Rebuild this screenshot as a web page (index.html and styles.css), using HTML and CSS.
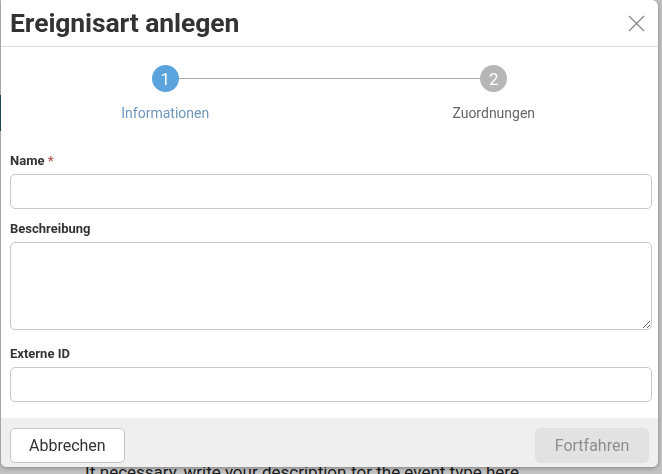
FILE: index.html
```html
<!DOCTYPE html>
<html lang="de">
<head>
    <meta charset="UTF-8">
    <meta name="viewport" content="width=device-width, initial-scale=1.0">
    <title>Ereignisart anlegen</title>
    <link rel="stylesheet" href="styles.css">
</head>
<body>
    <div class="page">
        <div class="page-strip"></div>
        <p class="page-hint">If necessary, write your description for the event type here.</p>
    </div>

    <div class="overlay">
        <div class="modal">
            <div class="modal-header">
                <h1>Ereignisart anlegen</h1>
                <button class="close" aria-label="Schließen">
                    <svg width="17" height="17" viewBox="0 0 17 17">
                        <path d="M1 1 L16 16 M16 1 L1 16" stroke="#8a8a8a" stroke-width="1.4" fill="none"/>
                    </svg>
                </button>
            </div>

            <div class="stepper">
                <div class="step active">
                    <span class="step-dot">1</span>
                    <span class="step-label">Informationen</span>
                </div>
                <div class="step">
                    <span class="step-dot">2</span>
                    <span class="step-label">Zuordnungen</span>
                </div>
            </div>

            <form class="modal-body">
                <label class="field">
                    <span class="field-label">Name <span class="req">*</span></span>
                    <input type="text">
                </label>
                <label class="field">
                    <span class="field-label">Beschreibung</span>
                    <textarea></textarea>
                </label>
                <label class="field">
                    <span class="field-label">Externe ID</span>
                    <input type="text">
                </label>
            </form>

            <div class="modal-footer">
                <button class="btn">Abbrechen</button>
                <button class="btn btn-primary" disabled>Fortfahren</button>
            </div>
        </div>
    </div>
</body>
</html>
```

FILE: styles.css
```css
* {
    margin: 0;
    padding: 0;
    box-sizing: border-box;
    font-family: Roboto, "Liberation Sans", Arial, sans-serif;
}

body {
    background: #ececec;
    color: #333;
    overflow: hidden;
}

.page {
    height: 474px;
    position: relative;
}

.page-strip {
    position: absolute;
    left: 0;
    top: 95px;
    width: 6px;
    height: 36px;
    background: #2f5f73;
}

.page-hint {
    position: absolute;
    left: 85px;
    top: 462px;
    font-size: 17px;
    color: #222;
}

.overlay {
    position: fixed;
    inset: 0;
    background: rgba(0, 0, 0, 0.18);
}

.modal {
    width: 657px;
    margin-left: 1px;
    background: #fff;
    border-radius: 0 6px 6px 6px;
    box-shadow: 0 1px 4px rgba(0, 0, 0, 0.35);
    overflow: hidden;
}

.modal-header {
    height: 47px;
    display: flex;
    align-items: center;
    justify-content: space-between;
    padding: 0 13px 1px 9px;
    border-bottom: 1px solid #dedede;
}

.modal-header h1 {
    font-size: 26.5px;
    font-weight: 700;
    color: #333;
    letter-spacing: -0.1px;
}

.close {
    border: none;
    background: none;
    display: flex;
    margin-top: 1px;
}

.stepper {
    display: flex;
    padding-top: 18px;
    position: relative;
}

.stepper::before {
    content: "";
    position: absolute;
    left: 178px;
    right: 176px;
    top: 31px;
    border-top: 1px solid #a9a9a9;
}

.step {
    flex: 1;
    display: flex;
    flex-direction: column;
    align-items: center;
    gap: 13px;
    position: relative;
}

.step-dot {
    width: 27px;
    height: 27px;
    border-radius: 50%;
    background: #b6b6b6;
    color: #fff;
    font-size: 17px;
    display: flex;
    align-items: center;
    justify-content: center;
}

.step-label {
    font-size: 14px;
    color: #666;
}

.step.active .step-dot {
    background: #5aa3dc;
}

.step.active .step-label {
    color: #6f97bd;
}

.modal-body {
    padding: 32px 6px 16px 9px;
    display: flex;
    flex-direction: column;
    gap: 12px;
}

.field {
    display: flex;
    flex-direction: column;
    gap: 6px;
}

.field-label {
    font-size: 13px;
    font-weight: 700;
    color: #333;
}

.req {
    color: #b2574f;
}

.field input,
.field textarea {
    width: 100%;
    height: 35px;
    border: 1px solid #c8c8c8;
    border-radius: 5px;
    background: #fff;
}

.field textarea {
    height: 88px;
    margin-bottom: 4px;
    resize: vertical;
}

.modal-footer {
    background: #efefef;
    display: flex;
    justify-content: space-between;
    padding: 10px 9px 4px 9px;
}

.btn {
    height: 35px;
    padding: 0 18px;
    font-size: 16px;
    color: #333;
    background: #fff;
    border: 1px solid #c4c4c4;
    border-radius: 5px;
}

.btn-primary {
    width: 114px;
    background: #e2e2e2;
    border-color: #e2e2e2;
    color: #8e8e8e;
}
```
